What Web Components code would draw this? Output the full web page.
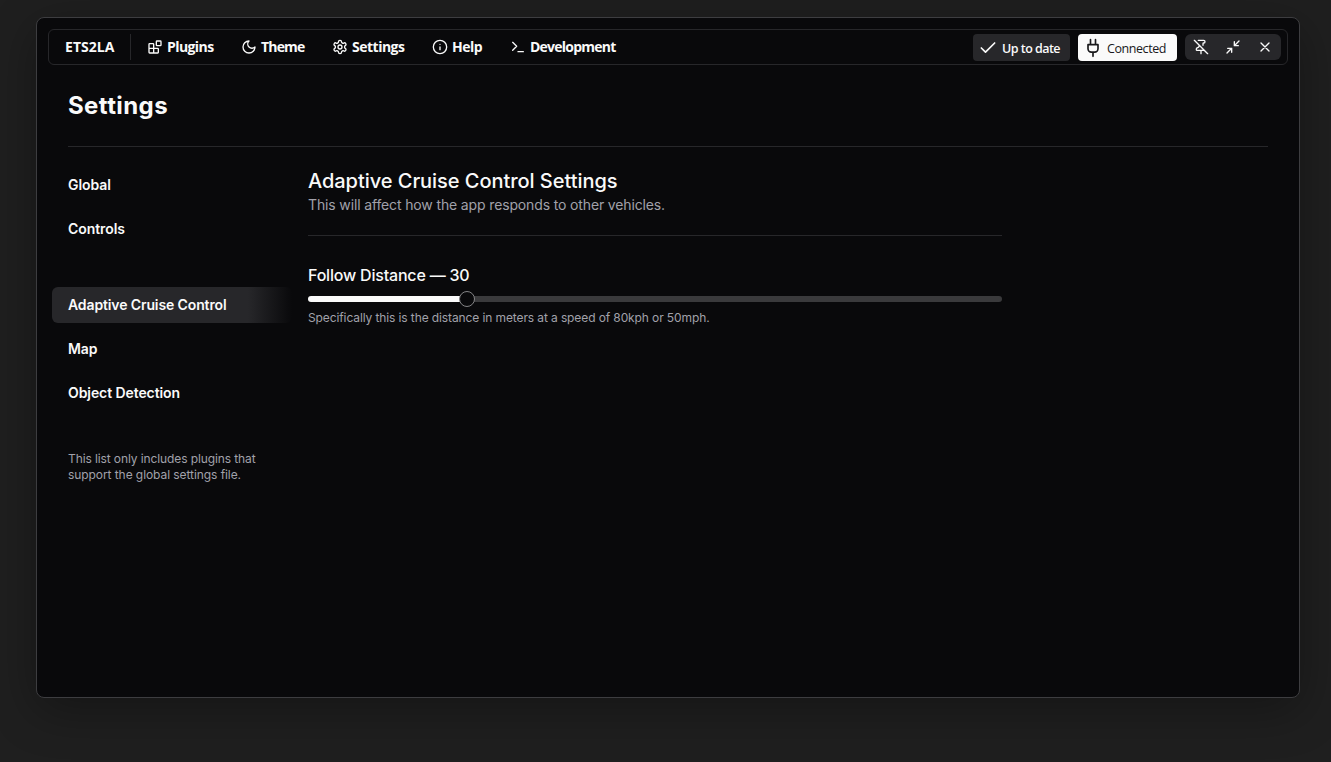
<!DOCTYPE html>
<html lang="en">
<head>
<meta charset="utf-8">
<title>ETS2LA</title>
<style>
  html, body { margin: 0; height: 100%; background: #1f1f1f; overflow: hidden; }
  body { font-family: Inter, "Liberation Sans", sans-serif; color: #fafafa; }
</style>
</head>
<body>
<ets-window>
  <ets-menubar slot="bar">
    <ets-menu icon="blocks" label="Plugins" fit="46.5" style="--w:94px"></ets-menu>
    <ets-menu icon="moon" label="Theme" fit="43.5" style="--w:91px"></ets-menu>
    <ets-menu icon="settings" label="Settings" fit="52.5" style="--w:100px"></ets-menu>
    <ets-menu icon="info" label="Help" fit="30" style="--w:78px"></ets-menu>
    <ets-menu icon="terminal" label="Development" fit="85.5" style="--w:120px"></ets-menu>
    <ets-status slot="end" icon="check" label="Up to date" fit="58" style="--w:97px"></ets-status>
    <ets-status slot="end" icon="plug" label="Connected" fit="59" light style="--w:99px"></ets-status>
    <ets-controls slot="end"></ets-controls>
  </ets-menubar>
  <ets-settings></ets-settings>
</ets-window>
<script>
const ICONS = {
  blocks: '<rect width="7" height="7" x="14" y="3" rx="1"/><path d="M10 21V8a1 1 0 0 0-1-1H4a1 1 0 0 0-1 1v12a1 1 0 0 0 1 1h12a1 1 0 0 0 1-1v-5a1 1 0 0 0-1-1H3"/>',
  moon: '<path d="M12 3a6 6 0 0 0 9 9 9 9 0 1 1-9-9Z"/>',
  settings: '<path d="M12.22 2h-.44a2 2 0 0 0-2 2v.18a2 2 0 0 1-1 1.73l-.43.25a2 2 0 0 1-2 0l-.15-.08a2 2 0 0 0-2.73.73l-.22.38a2 2 0 0 0 .73 2.73l.15.1a2 2 0 0 1 1 1.72v.51a2 2 0 0 1-1 1.74l-.15.09a2 2 0 0 0-.73 2.73l.22.38a2 2 0 0 0 2.73.73l.15-.08a2 2 0 0 1 2 0l.43.25a2 2 0 0 1 1 1.73V20a2 2 0 0 0 2 2h.44a2 2 0 0 0 2-2v-.18a2 2 0 0 1 1-1.73l.43-.25a2 2 0 0 1 2 0l.15.08a2 2 0 0 0 2.73-.73l.22-.39a2 2 0 0 0-.73-2.73l-.15-.08a2 2 0 0 1-1-1.74v-.5a2 2 0 0 1 1-1.74l.15-.09a2 2 0 0 0 .73-2.73l-.22-.38a2 2 0 0 0-2.73-.73l-.15.08a2 2 0 0 1-2 0l-.43-.25a2 2 0 0 1-1-1.73V4a2 2 0 0 0-2-2z"/><circle cx="12" cy="12" r="3"/>',
  info: '<circle cx="12" cy="12" r="10"/><path d="M12 16v-4M12 8h.01"/>',
  terminal: '<path d="m4 17 6-6-6-6M12 19h8"/>',
  check: '<path d="M20 6 9 17l-5-5"/>',
  plug: '<path d="M12 22v-5M9 8V2M15 8V2M18 8v5a4 4 0 0 1-4 4h-4a4 4 0 0 1-4-4V8Z"/>',
  pinoff: '<path d="M12 17v5M15 9.34V7a1 1 0 0 1 1-1 2 2 0 0 0 0-4H7.89M2 2l20 20M9 9v1.76a2 2 0 0 1-1.11 1.79l-1.78.9A2 2 0 0 0 5 15.24V16a1 1 0 0 0 1 1h11"/>',
  minimize: '<path d="M4 14h6v6M20 10h-6V4M14 10l7-7M3 21l7-7"/>',
  close: '<path d="M18 6 6 18M6 6l12 12"/>'
};

function define(name, render) {
  customElements.define(name, class extends HTMLElement {
    connectedCallback() {
      if (!this.shadowRoot) this.attachShadow({ mode: 'open' }).innerHTML = render(this);
    }
  });
}

define('ets-icon', el => `<style>
  :host { display: block; flex: none; width: var(--size, 16px); height: var(--size, 16px); }
  svg { display: block; width: 100%; height: 100%; fill: none; stroke: currentColor; stroke-width: var(--stroke, 2); stroke-linecap: round; stroke-linejoin: round; }
</style><svg viewBox="0 0 24 24">${ICONS[el.getAttribute('name')]}</svg>`);

// A single line of text whose tracking is adjusted to fill the given width.
customElements.define('ets-text', class extends HTMLElement {
  connectedCallback() {
    if (this.shadowRoot) return;
    this.attachShadow({ mode: 'open' }).innerHTML =
      '<style>:host{display:block;white-space:nowrap}span{display:inline-block}</style><span></span>';
    const span = this.shadowRoot.querySelector('span');
    const text = this.getAttribute('value');
    span.textContent = text;
    const width = span.getBoundingClientRect().width;
    span.style.letterSpacing = ((this.getAttribute('width') - width) / text.length).toFixed(3) + 'px';
  }
});

define('ets-window', () => `<style>
  :host { display: block; box-sizing: border-box; width: 1264px; height: 681px; margin: 17px 0 0 36px; border: 1px solid #3d3d40; border-radius: 8px; background: #09090b; box-shadow: 0 12px 48px rgba(0,0,0,.32); }
  .bar { padding: 11px 11px 0; }
</style><div class="bar"><slot name="bar"></slot></div><slot></slot>`);

define('ets-menubar', () => `<style>
  :host { display: flex; box-sizing: border-box; height: 36px; border: 1px solid #27272a; border-radius: 6px; padding: 0 6px 0 0; font-family: "Open Sans", "Noto Sans", sans-serif; font-size: 14px; line-height: 20px; }
  .brand { box-sizing: border-box; width: 82px; height: 26px; margin-top: 4px; padding: 3px 0 0 16px; border-right: 1px solid #27272a; font-weight: 700; }
  .menus { display: flex; padding-left: 4px; }
  .end { display: flex; gap: 8px; margin-left: auto; padding-top: 4px; }
</style><div class="brand"><ets-text value="ETS2LA" width="49.5"></ets-text></div>
<div class="menus"><slot></slot></div><div class="end"><slot name="end"></slot></div>`);

define('ets-menu', el => `<style>
  :host { display: flex; box-sizing: border-box; width: var(--w); height: 34px; padding: 0 0 0 12px; align-items: center; gap: 4px; font-weight: 700; }
</style><ets-icon name="${el.getAttribute('icon')}"></ets-icon><ets-text value="${el.getAttribute('label')}" width="${el.getAttribute('fit')}"></ets-text>`);

define('ets-status', el => `<style>
  :host { display: flex; box-sizing: border-box; width: var(--w); height: 27px; padding-left: 5px; gap: 4px; align-items: center; border-radius: 4px; background: #27272a; font-size: 12.5px; font-weight: 600; }
  :host([light]) { background: #fafafa; color: #18181b; font-weight: 500; }
  ets-icon { --size: 20px; }
  ets-text { padding-top: 2px; }
</style><ets-icon name="${el.getAttribute('icon')}"></ets-icon><ets-text value="${el.getAttribute('label')}" width="${el.getAttribute('fit')}"></ets-text>`);

define('ets-controls', () => `<style>
  :host { display: grid; grid-template-columns: repeat(3, 32px); width: 96px; height: 26px; place-items: center; border-radius: 6px; background: #27272a; }
</style><ets-icon name="pinoff"></ets-icon><ets-icon name="minimize"></ets-icon><ets-icon name="close"></ets-icon>`);

define('ets-nav-item', el => `<style>
  :host { display: flex; box-sizing: border-box; height: 36px; padding: 0 16px; align-items: center; border-radius: 6px; font-size: 14px; line-height: 20px; font-weight: 600; }
  :host([active]) { background: linear-gradient(90deg, #27272a 0 196px, #09090b 240px); }
</style><ets-text value="${el.getAttribute('label')}" width="${el.getAttribute('fit')}"></ets-text>`);

define('ets-slider', () => `<style>
  :host { display: flex; align-items: center; height: 16px; }
  .fill { width: 152px; height: 6px; margin-right: -1px; border-radius: 3px 0 0 3px; background: #fafafa; }
  .thumb { box-sizing: border-box; z-index: 1; width: 16px; height: 16px; border: 1px solid #848486; border-radius: 50%; background: #09090b; }
  .rest { flex: 1; height: 6px; margin-left: -1px; border-radius: 0 3px 3px 0; background: #3a3a3c; }
</style><div class="fill"></div><div class="thumb"></div><div class="rest"></div>`);

define('ets-settings', () => `<style>
  :host { display: block; padding: 25px 31px 0; }
  h1, h2, h3 { margin: 0; }
  h1 { font-size: 24px; line-height: 32px; font-weight: 700; }
  hr { height: 1px; border: 0; margin: 0; background: #27272a; }
  .cols { display: grid; grid-template-columns: 240px 694px; gap: 16px; margin: 20px 0 0 -16px; }
  nav { display: grid; gap: 8px; align-content: start; }
  .group { margin-top: 32px; }
  .muted { color: #a1a1aa; font-weight: 400; }
  .note { margin: 32px 0 0 16px; font-size: 12px; line-height: 16px; }
  h2 { font-size: 20px; line-height: 28px; font-weight: 500; }
  .sub { font-size: 14px; line-height: 20px; }
  h3 { margin: 27px 0 4px; font-size: 16px; line-height: 24px; font-weight: 500; }
  .hint { margin-top: 3px; font-size: 12px; line-height: 16px; }
</style>
<h1><ets-text value="Settings" width="100"></ets-text></h1>
<hr style="margin-top:24px">
<div class="cols">
  <nav>
    <ets-nav-item label="Global" fit="43"></ets-nav-item>
    <ets-nav-item label="Controls" fit="57"></ets-nav-item>
    <ets-nav-item class="group" active label="Adaptive Cruise Control" fit="158.5"></ets-nav-item>
    <ets-nav-item label="Map" fit="29.5"></ets-nav-item>
    <ets-nav-item label="Object Detection" fit="112"></ets-nav-item>
    <div class="note muted">
      <ets-text value="This list only includes plugins that" width="187.5"></ets-text>
      <ets-text value="support the global settings file." width="173"></ets-text>
    </div>
  </nav>
  <main>
    <h2><ets-text value="Adaptive Cruise Control Settings" width="309.5"></ets-text></h2>
    <div class="sub muted"><ets-text value="This will affect how the app responds to other vehicles." width="357"></ets-text></div>
    <hr style="margin-top:20px">
    <h3><ets-text value="Follow Distance — 30" width="161.5"></ets-text></h3>
    <ets-slider></ets-slider>
    <div class="hint muted"><ets-text value="Specifically this is the distance in meters at a speed of 80kph or 50mph." width="401.5"></ets-text></div>
  </main>
</div>`);
</script>
</body>
</html>
